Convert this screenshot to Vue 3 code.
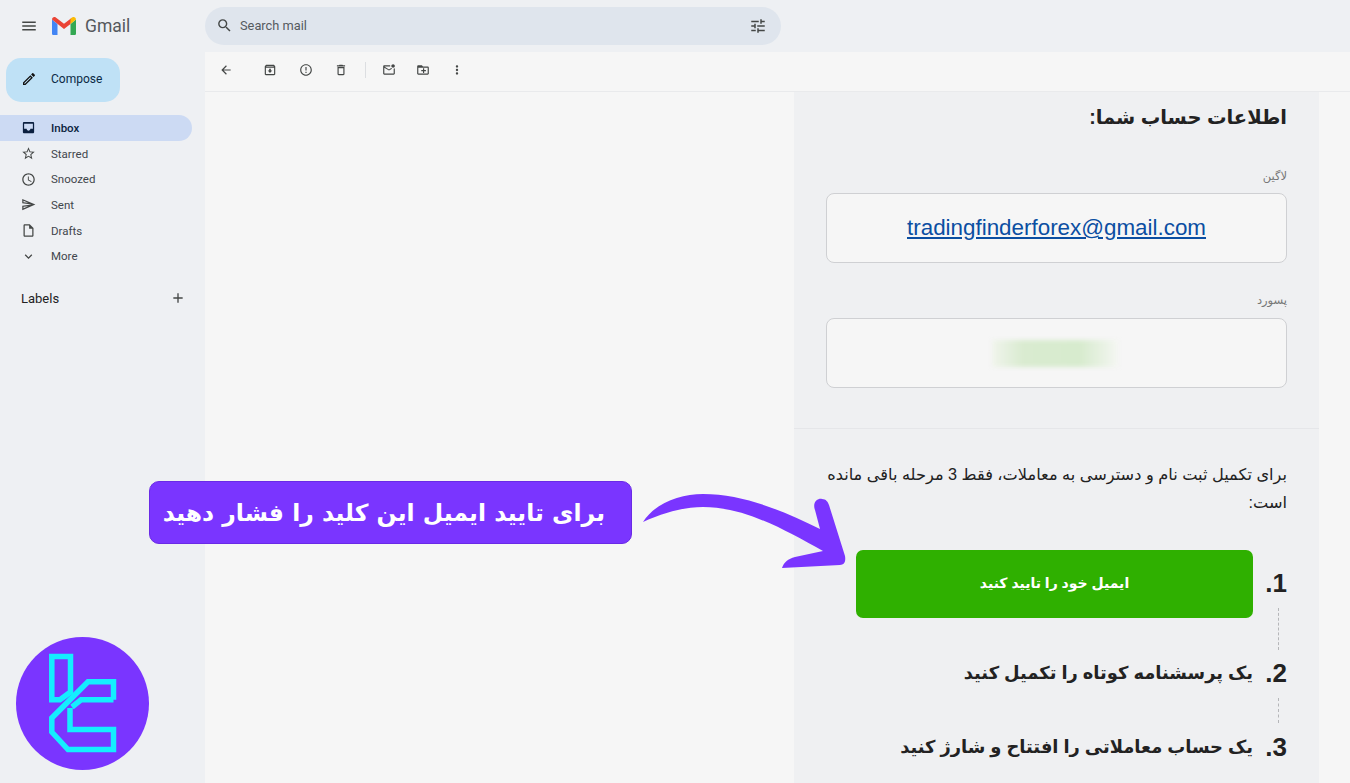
<script setup>
const icons = {
  menu: 'M3 18h18v-2H3v2zm0-5h18v-2H3v2zm0-7v2h18V6H3z',
  pencil: 'M14.06 9.02l.92.92L5.92 19H5v-.92l9.06-9.06M17.66 3c-.25 0-.51.1-.7.29l-1.83 1.83 3.75 3.75 1.83-1.83c.39-.39.39-1.02 0-1.41l-2.34-2.34c-.2-.2-.45-.29-.71-.29zm-3.6 3.19L3 17.25V21h3.75L17.81 9.94l-3.75-3.75z',
  search: 'M15.5 14h-.79l-.28-.27A6.471 6.471 0 0 0 16 9.5 6.5 6.5 0 1 0 9.5 16c1.61 0 3.09-.59 4.23-1.57l.27.28v.79l5 4.99L20.49 19l-4.99-5zm-6 0C7.01 14 5 11.99 5 9.5S7.01 5 9.5 5 14 7.01 14 9.5 11.99 14 9.5 14z',
  tune: 'M3 17v2h6v-2H3zM3 5v2h10V5H3zm10 16v-2h8v-2h-8v-2h-2v6h2zM7 9v2H3v2h4v2h2V9H7zm14 4v-2H11v2h10zm-6-4h2V7h4V5h-4V3h-2v6z',
  plus: 'M19 13h-6v6h-2v-6H5v-2h6V5h2v6h6v2z'
}
const navItems = [
  { label: 'Inbox', active: true, d: 'M19 3H5c-1.1 0-2 .9-2 2v14c0 1.1.9 2 2 2h14c1.1 0 2-.9 2-2V5c0-1.100-.9-2-2-2zm0 11h-4c0 1.660-1.350 3-3 3s-3-1.340-3-3H5V6h14v8z' },
  { label: 'Starred', d: 'M22 9.24l-7.19-.62L12 2 9.19 8.63 2 9.24l5.46 4.73L5.82 21 12 17.27 18.18 21l-1.63-7.03L22 9.24zM12 15.4l-3.76 2.27 1-4.28-3.32-2.88 4.38-.38L12 6.1l1.71 4.04 4.38.38-3.32 2.88 1 4.28L12 15.4z' },
  { label: 'Snoozed', d: 'M11.99 2C6.47 2 2 6.48 2 12s4.47 10 9.99 10C17.52 22 22 17.52 22 12S17.52 2 11.99 2zM12 20c-4.42 0-8-3.58-8-8s3.58-8 8-8 8 3.58 8 8-3.58 8-8 8zm.5-13H11v6l5.25 3.15.75-1.23-4.5-2.67z' },
  { label: 'Sent', d: 'M2 3v7l15 2-15 2v7l21-9L2 3zm2 3.030 7.500 3.220L4 8.250V6.030zm0 11.940v-2.220l7.500-1L4 17.970z' },
  { label: 'Drafts', d: 'M14 2H6c-1.1 0-1.99.9-1.99 2L4 20c0 1.1.89 2 1.99 2H18c1.1 0 2-.9 2-2V8l-6-6zM6 20V4h7v5h5v11H6z' },
  { label: 'More', d: 'M16.59 8.59L12 13.17 7.41 8.59 6 10l6 6 6-6z' }
]
const toolsA = ['M20 11H7.83l5.59-5.59L12 4l-8 8 8 8 1.41-1.41L7.83 13H20v-2z']
const toolsB = [
  'M20.54 5.23l-1.39-1.68C18.88 3.21 18.47 3 18 3H6c-.47 0-.88.21-1.16.55L3.46 5.23C3.17 5.57 3 6.02 3 6.5V19c0 1.1.9 2 2 2h14c1.1 0 2-.9 2-2V6.5c0-.48-.17-.93-.46-1.27zM6.24 5h11.52l.83 1H5.42l.82-1zM5 19V8h14v11H5zm8.45-9h-2.9v3H8l4 4 4-4h-2.55z',
  'M11 15h2v2h-2zm0-8h2v6h-2zm.99-5C6.47 2 2 6.48 2 12s4.47 10 9.99 10C17.52 22 22 17.52 22 12S17.52 2 11.99 2zM12 20c-4.42 0-8-3.58-8-8s3.58-8 8-8 8 3.58 8 8-3.58 8-8 8z',
  'M6 19c0 1.1.9 2 2 2h8c1.1 0 2-.9 2-2V7H6v12zM8 9h8v10H8V9zm7.5-5l-1-1h-5l-1 1H5v2h14V4h-3.5z'
]
const toolsC = [
  'M22 8.98V18c0 1.1-.9 2-2 2H4c-1.1 0-2-.9-2-2V6c0-1.1.9-2 2-2h10.1c-.06.32-.1.66-.1 1s.04.68.1 1H4l8 5 3.67-2.29c.47.43 1.02.76 1.63.98L12 13 4 8v10h16V9.9c.74-.15 1.42-.48 2-.92zM16 5c0 1.66 1.34 3 3 3s3-1.34 3-3-1.34-3-3-3-3 1.34-3 3z',
  'M20 6h-8l-2-2H4c-1.1 0-1.99.9-1.99 2L2 18c0 1.1.9 2 2 2h16c1.1 0 2-.9 2-2V8c0-1.1-.9-2-2-2zm0 12H4V8h16v10zm-8-1h2v-3h3v-2h-3V9h-2v3H9v2h3v3z',
  'M12 8c1.1 0 2-.9 2-2s-.9-2-2-2-2 .9-2 2 .9 2 2 2zm0 2c-1.1 0-2 .9-2 2s.9 2 2 2 2-.9 2-2-.9-2-2-2zm0 6c-1.1 0-2 .9-2 2s.9 2 2 2 2-.9 2-2-.9-2-2-2z'
]
</script>

<template>
  <div class="app">
    <aside class="sidebar">
      <div class="brand">
        <svg class="ico menu" viewBox="0 0 24 24"><path :d="icons.menu" /></svg>
        <svg class="gm" viewBox="0 0 24 18">
          <path fill="#4285f4" d="M0 2.5V16.4C0 17.3.7 18 1.6 18H5.5V7L0 2.5z" />
          <path fill="#34a853" d="M24 2.5V16.4c0 .9-.7 1.6-1.6 1.6H18.500V7L24 2.500z" />
          <path fill="#ea4335" d="M0 2.500C0 .5 2.200-.6 3.800.6L12 6.800 20.200.6 18.500 7 12 12 0 2.500z" />
          <path fill="#fbbc04" d="M18.500 1.700 20.200.6C21.800-.6 24 .5 24 2.500L18.500 7V1.700z" />
        </svg>
        <span class="gmail">Gmail</span>
      </div>
      <button class="compose">
        <svg class="ico" viewBox="0 0 24 24"><path :d="icons.pencil" /></svg>
        <span>Compose</span>
      </button>
      <nav class="nav">
        <a v-for="item in navItems" :key="item.label" class="nav-row" :class="{ active: item.active }">
          <svg class="ico" viewBox="0 0 24 24"><path fill-rule="evenodd" :d="item.d" /></svg>
          <span>{{ item.label }}</span>
        </a>
      </nav>
      <div class="labels">
        <span>Labels</span>
        <svg class="ico" viewBox="0 0 24 24"><path :d="icons.plus" /></svg>
      </div>
    </aside>

    <div class="main">
      <header class="topbar">
        <div class="search">
          <svg class="ico" viewBox="0 0 24 24"><path :d="icons.search" /></svg>
          <span class="search-text">Search mail</span>
          <svg class="ico tune" viewBox="0 0 24 24"><path :d="icons.tune" /></svg>
        </div>
      </header>
      <section class="mail">
        <div class="toolbar">
          <div class="tools back">
            <svg v-for="d in toolsA" :key="d" class="ico" viewBox="0 0 24 24"><path :d="d" /></svg>
          </div>
          <div class="tools wide">
            <svg v-for="d in toolsB" :key="d" class="ico" viewBox="0 0 24 24"><path :d="d" /></svg>
          </div>
          <i class="sep"></i>
          <div class="tools">
            <svg v-for="d in toolsC" :key="d" class="ico" viewBox="0 0 24 24"><path :d="d" /></svg>
          </div>
        </div>
        <div class="content">
          <article class="panel" dir="rtl">
            <div class="account">
              <h2>اطلاعات حساب شما:</h2>
              <div class="field-label first">لاگین</div>
              <div class="box"><a class="mail-link" dir="ltr">tradingfinderforex@gmail.com</a></div>
              <div class="field-label">پسورد</div>
              <div class="box"><span class="blurred"></span></div>
            </div>
            <div class="steps-area">
              <p class="intro">برای تکمیل ثبت نام و دسترسی به معاملات، فقط 3 مرحله باقی مانده است:</p>
              <div class="step first-step">
                <span class="num">1.</span>
                <a class="verify">ایمیل خود را تایید کنید</a>
              </div>
              <i class="dash d1"></i>
              <div class="step s2">
                <span class="num">2.</span>
                <span class="step-text">یک پرسشنامه کوتاه را تکمیل کنید</span>
              </div>
              <i class="dash d2"></i>
              <div class="step s3">
                <span class="num">3.</span>
                <span class="step-text">یک حساب معاملاتی را افتتاح و شارژ کنید</span>
              </div>
            </div>
          </article>
        </div>
      </section>
    </div>

    <div class="callout" dir="rtl">برای تایید ایمیل این کلید را فشار دهید</div>
    <svg class="arrow" viewBox="640 490 210 85">
      <path fill="#7a35ff" d="M643 522C655 503 680 494 703 494C745 494 785 512 820 529L815 510C812 502 818 498 822 499C826 499 828 502 829 505L845 556C846 562 844 565 840 565L782 568C784 562 788 559 795 557L823 551C785 530 745 507 703 507C685 507 665 512 643 522Z" />
    </svg>
    <svg class="logo" viewBox="16 637 133 133">
      <circle cx="82.500" cy="703.500" r="66.500" fill="#7a35ff" />
      <g fill="none" stroke="#14eeff" stroke-width="5.500">
        <path d="M51.800 656.500H70.500V692L60 699.800H51.800Z" />
        <path d="M113.500 699.800V681.800H88L51.800 718V732L68 749.500H113.500V729.500H70V708" />
        <path d="M113.500 699.800H81L72 707" />
      </g>
    </svg>
  </div>
</template>

<style>
html, body { margin: 0; background: #eef0f3; }
</style>

<style scoped>
.app {
  position: relative;
  display: flex;
  width: 1350px;
  height: 783px;
  overflow: hidden;
  background: #eef0f3;
  font-family: Roboto, "Liberation Sans", sans-serif;
  color: #222;
}
.ico { width: 16px; height: 16px; fill: #444746; flex: none; }

.sidebar { width: 205px; flex: none; }
.brand { display: flex; align-items: center; height: 52px; padding-left: 20px; }
.menu { width: 18px; height: 18px; }
.gm { width: 24px; height: 18px; margin-left: 14px; }
.gmail { margin-left: 9px; font-size: 17.500px; color: #55585c; }
.compose {
  display: flex; align-items: center; gap: 14px;
  width: 114px; height: 44px; margin: 6px 0 0 6px; padding: 0 0 2px 15px;
  border: 0; border-radius: 15px; background: #bfe1f6;
  font: 400 12px Roboto, sans-serif; color: #0b2a45;
}
.compose .ico { fill: #111; }
.nav { margin-top: 13px; width: 192px; }
.nav-row {
  display: flex; align-items: center; gap: 15px;
  height: 25.700px; padding-left: 21px;
  border-radius: 0 13px 13px 0;
  font-size: 11.500px; color: #41464c;
}
.nav-row .ico { width: 15px; height: 15px; }
.nav-row.active { background: #ccdaf3; color: #0b1f3f; font-weight: 500; }
.nav-row.active .ico { fill: #0b1f3f; }
.labels {
  display: flex; align-items: center; justify-content: space-between;
  width: 165px; margin: 21px 0 0 21px;
  font-size: 13px; color: #222;
}

.main { flex: 1; display: flex; flex-direction: column; min-width: 0; }
.topbar { height: 52px; flex: none; padding-top: 7px; box-sizing: border-box; }
.search {
  display: flex; align-items: center;
  width: 576px; height: 38px; padding: 0 14px 1px 11px; box-sizing: border-box;
  border-radius: 19px; background: #dfe5ed;
  font-size: 12.800px; color: #555a60;
}
.search .ico:first-child { width: 17px; height: 17px; }
.search-text { margin-left: 7px; flex: 1; }
.tune { width: 18px; height: 18px; }
.mail { flex: 1; display: flex; flex-direction: column; background: #f6f6f6; min-height: 0; }
.toolbar {
  display: flex; align-items: center;
  height: 36px; flex: none; padding: 0 0 3px 14px;
  border-bottom: 1px solid #e9eaec;
}
.tools { display: flex; align-items: center; gap: 20px; }
.tools.wide { gap: 21.500px; }
.tools .ico { width: 14px; height: 14px; }
.back { margin-right: 30px; }
.sep { width: 1px; height: 16px; background: #dcdee1; margin: 0 16px 0 17px; }
.content { flex: 1; display: flex; justify-content: flex-end; padding-right: 31px; min-height: 0; }

.panel {
  width: 525px; box-sizing: border-box;
  background: #eff0f2;
  font-family: "Liberation Sans", "DejaVu Sans", sans-serif;
}
.account { padding: 10px 32px 40px; border-bottom: 1px solid #e5e6e9; }
h2 { margin: 0; font-size: 19.500px; line-height: 30px; font-weight: 700; color: #222; }
.field-label { margin-top: 30px; margin-bottom: 11px; font-size: 11.500px; line-height: 14px; color: #777; }
.field-label.first { margin-top: 37px; margin-bottom: 10px; }
.box {
  display: flex; align-items: center; justify-content: center;
  height: 70px; box-sizing: border-box;
  border: 1px solid #cfd0d3; border-radius: 8px; background: #f6f6f6;
}
.mail-link { font-size: 22.400px; color: #0b4ea2; text-decoration: underline; }
.blurred {
  width: 126px; height: 27px; margin-left: -3px;
  background: linear-gradient(90deg, #f0f4ec, #d9ebd0 25%, #d7ebce 70%, #f4f6f2);
  filter: blur(2px);
}
.steps-area { padding: 31px 32px 0; }
.intro { margin: 0; font-size: 16.200px; line-height: 28px; color: #222; }
.step { display: flex; align-items: center; }
.num { width: 34px; flex: none; font-size: 26px; font-weight: 700; color: #222; line-height: 30px; }
.first-step { margin-top: 34px; }
.first-step .num { margin-top: -3px; }
.verify {
  display: flex; align-items: center; justify-content: center;
  width: 397px; height: 68px; box-sizing: border-box; padding-bottom: 2px;
  border-radius: 7px; background: #2fb000;
  color: #fff; font-size: 14px; font-weight: 700;
}
.step-text { font-size: 17.900px; font-weight: 700; color: #222; white-space: nowrap; }
.dash { display: block; width: 0; margin-right: 8px; border-right: 1px dashed #b5b6b9; }
.d1 { height: 42px; margin-top: -10px; }
.d2 { height: 25px; margin-top: 10px; }
.s2 { margin-top: 8px; }
.s3 { margin-top: 9px; }

.callout {
  position: absolute; left: 149px; top: 481px;
  width: 483px; height: 63px; box-sizing: border-box;
  padding-right: 26px;
  display: flex; align-items: center;
  border: 1px solid #6a2ae6; border-radius: 10px;
  background: #7a35ff; color: #fff;
  font-family: "DejaVu Sans", sans-serif; font-size: 23.500px; font-weight: 700;
  white-space: nowrap;
}
.arrow { position: absolute; left: 640px; top: 490px; width: 210px; height: 85px; }
.logo { position: absolute; left: 16px; top: 637px; width: 133px; height: 133px; }
</style>
